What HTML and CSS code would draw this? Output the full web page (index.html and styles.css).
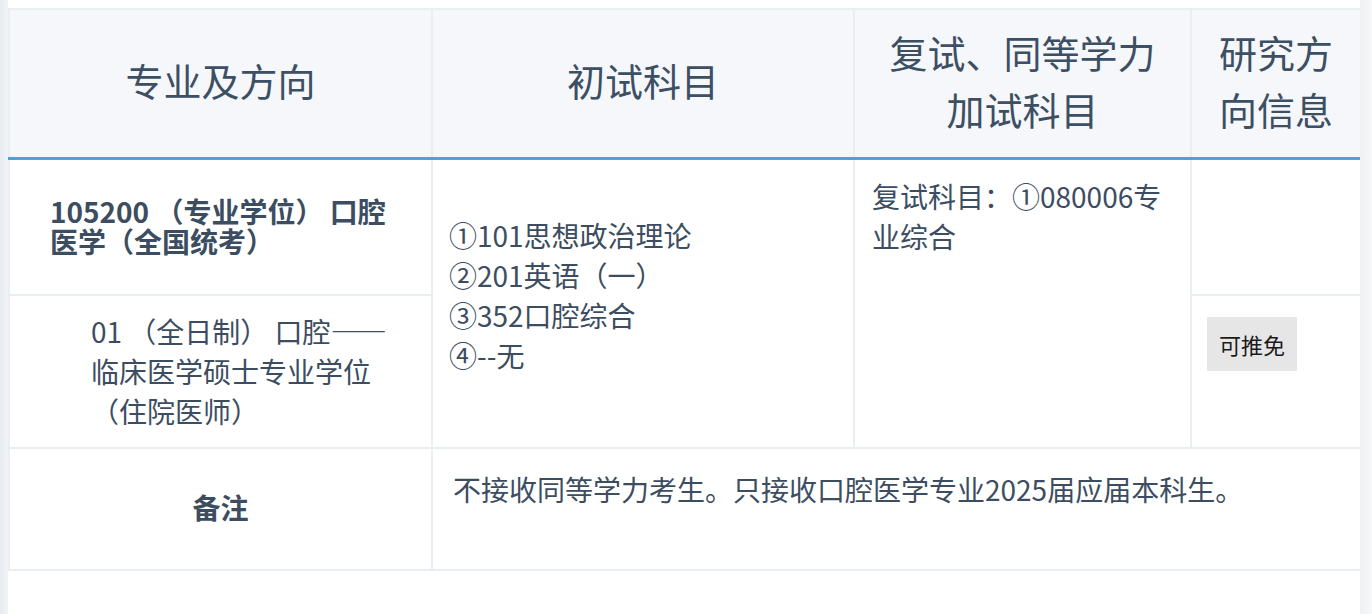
FILE: index.html
```html
<!DOCTYPE html>
<html lang="zh-CN">
<head>
<meta charset="utf-8">
<title>招生专业目录</title>
<link rel="stylesheet" href="styles.css">
</head>
<body>
<div class="page">
  <div class="shade shade-left"></div>
  <div class="scroller">
    <table class="plan">
      <colgroup><col class="c1"><col class="c2"><col class="c3"><col class="c4"></colgroup>
      <thead>
        <tr class="head"><th>专业及方向</th><th>初试科目</th><th>复试、同等学力加试科目</th><th>研究方向信息</th></tr>
      </thead>
      <tbody>
        <tr class="r1">
          <td class="major">105200 （专业学位） 口腔医学（全国统考）</td>
          <td rowspan="2" class="exam">①101思想政治理论<br>②201英语（一）<br>③352口腔综合<br>④--无</td>
          <td rowspan="2" class="retest">复试科目：①080006专业综合</td>
          <td class="info"></td>
        </tr>
        <tr class="r2">
          <td class="dir">01 （全日制） 口腔——临床医学硕士专业学位（住院医师）</td>
          <td class="info"><span class="badge">可推免</span></td>
        </tr>
        <tr class="note">
          <td class="note-label">备注</td>
          <td colspan="3" class="note-text">不接收同等学力考生。只接收口腔医学专业2025届应届本科生。</td>
        </tr>
      </tbody>
    </table>
  </div>
  <div class="shade shade-right"></div>
</div>
</body>
</html>
```

FILE: styles.css
```css
html, body {
  margin: 0;
  padding: 0;
  background: #ffffff;
}
body {
  font-family: "Noto Sans CJK SC", "Noto Sans", sans-serif;
  color: #3c4d61;
}
.page {
  display: flex;
  height: 614px;
}
.shade {
  flex: none;
}
.shade-left {
  width: 8px;
  background: linear-gradient(90deg, #e8ecf0, #f1f4f7);
}
.shade-right {
  width: 12px;
  background: linear-gradient(90deg, #eef1f4, #f6f7f9);
}
.scroller {
  flex: 1;
  padding-top: 8px;
  min-width: 0;
}
.plan {
  width: 100%;
  border-collapse: collapse;
  table-layout: fixed;
  border: 2px solid #e9eef2;
}
.c1 { width: 423px; }
.c2 { width: 422px; }
.c3 { width: 337px; }
.c4 { width: 170px; }
.plan th,
.plan td {
  border: 2px solid #e9eef2;
  padding: 0;
}
.head {
  height: 149px;
}
.plan th {
  background: #f5f7fb;
  font-weight: 400;
  font-size: 38px;
  line-height: 57px;
  color: #3d4f63;
  padding: 0 20px 7px 20px;
  border-bottom: 3px solid #4aa3e0;
  text-align: center;
  vertical-align: middle;
}
.plan td {
  font-size: 28px;
  line-height: 40px;
  vertical-align: top;
}
.r1 { height: 137px; }
.r2 { height: 153px; }
.note { height: 122px; }
.r1 td.major {
  font-weight: 700;
  line-height: 30px;
  padding: 0 36px 2px 40px;
  vertical-align: middle;
}
.r2 td.dir {
  padding: 0 38px 2px 81px;
  vertical-align: middle;
}
td.exam {
  padding: 0 16px 16px 16px;
  vertical-align: middle;
}
td.retest {
  padding: 16px 17px 0 17px;
}
td.info {
  padding: 21px 15px 0 15px;
}
.badge {
  display: inline-block;
  background: #e6e6e6;
  color: #1b1b1b;
  font-size: 22px;
  line-height: 22px;
  padding: 16px 12px;
}
td.note-label {
  font-weight: 700;
  text-align: center;
  vertical-align: middle;
  padding-bottom: 4px;
}
td.note-text {
  padding: 20px 20px 0 20px;
}
```
